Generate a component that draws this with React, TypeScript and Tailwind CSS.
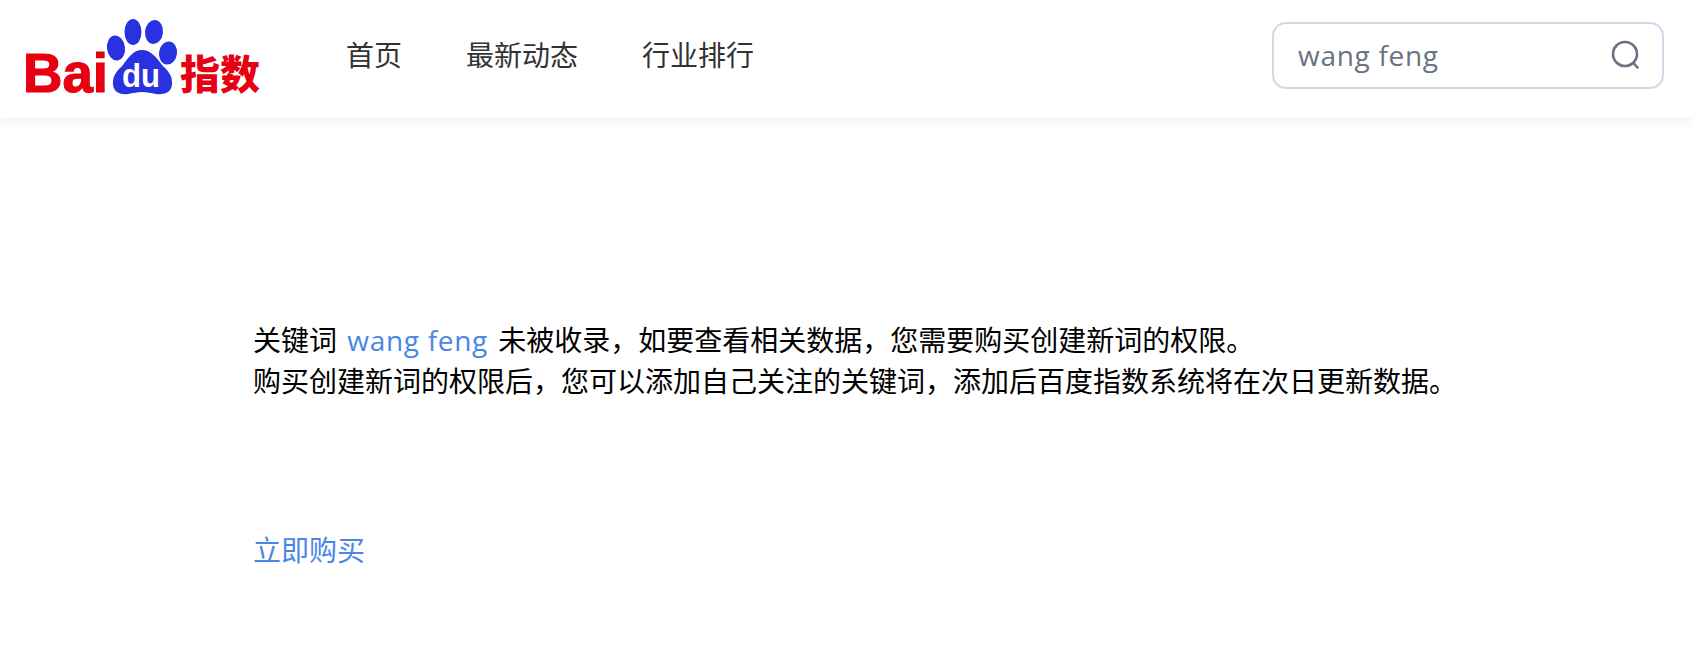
import React from "react";

const font = { fontFamily: '"Open Sans","Noto Sans CJK SC",sans-serif' };

function Logo() {
  return (
    <svg width="234" height="78" viewBox="0 0 234 78" className="mt-[6px] block shrink-0 overflow-visible">
      <text x="-3" y="73" fill="#e60012" fontFamily="Liberation Sans" fontWeight="700" fontSize="56" textLength="85" lengthAdjust="spacingAndGlyphs" stroke="#e60012" strokeWidth="1.2">Bai</text>
      <ellipse cx="90" cy="29" rx="9" ry="12.500" fill="#2932e1" transform="rotate(-8 90 29)" />
      <ellipse cx="107" cy="13" rx="8.500" ry="13" fill="#2932e1" />
      <ellipse cx="128" cy="13" rx="9" ry="12" fill="#2932e1" transform="rotate(6 128 13)" />
      <ellipse cx="142" cy="34" rx="9" ry="11.500" fill="#2932e1" transform="rotate(8 142 34)" />
      <path d="M116 31c-9 0-14 8-19 15-5 5-11 10-10 20 1 8 9 10 15 9 5-1 9-2 14-2s9 1 14 2c7 1 15-1 16-9 1-10-5-15-10-20-5-7-11-15-20-15z" fill="#2932e1" />
      <text x="115" y="68" textAnchor="middle" fill="#fff" fontFamily="Liberation Sans" fontWeight="700" fontSize="33" textLength="38" lengthAdjust="spacingAndGlyphs">du</text>
      <text x="154" y="70" fill="#e60012" fontFamily="Noto Sans CJK SC" fontWeight="900" fontSize="40">指数</text>
    </svg>
  );
}

export default function App() {
  return (
    <div className="min-h-[651px] bg-white text-[28px] leading-[41px] text-black" style={font}>
      <header className="flex h-[118px] items-center bg-white pr-[29px] pb-[8px] pl-[26px] shadow-[0_4px_12px_rgba(0,0,0,0.06)]">
        <Logo />
        <nav className="ml-[86px] flex gap-[64px] text-[#333333]">
          <a>首页</a>
          <a>最新动态</a>
          <a>行业排行</a>
        </nav>
        <div className="ml-auto flex h-[67px] w-[392px] items-center justify-between rounded-[14px] border-2 border-[#d3d8e8] pr-[20px] pl-[24px] text-[#6b7280]">
          <span className="tracking-[0.7px]">wang feng</span>
          <svg width="32" height="32" viewBox="0 0 32 32" fill="none" stroke="#6b7280" strokeWidth="2.600">
            <circle cx="15" cy="15" r="12" />
            <path d="M23.500 24l4 4.500" strokeLinecap="round" />
          </svg>
        </div>
      </header>
      <main className="pt-[202px] pl-[253px]">
        <p>
          关键词 <span className="mx-[3px] tracking-[0.7px] text-[#4a86e8]">wang feng</span> 未被收录，如要查看相关数据，您需要购买创建新词的权限。
        </p>
        <p>购买创建新词的权限后，您可以添加自己关注的关键词，添加后百度指数系统将在次日更新数据。</p>
        <a className="mt-[128px] block text-[#4a86e8]">立即购买</a>
      </main>
    </div>
  );
}
